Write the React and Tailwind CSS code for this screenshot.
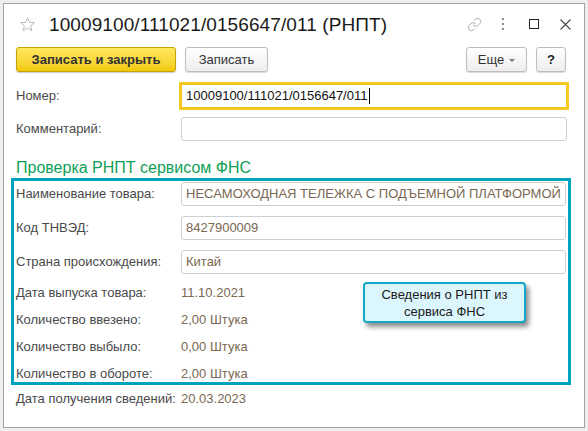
import { Link } from 'lucide-react';

function Field({ children, className = '' }) {
  return (
    <div className={`h-[24px] flex-1 flex items-center px-[4px] border border-[#cfcfcf] rounded-[3px] bg-white overflow-hidden whitespace-nowrap text-[#7a6852] ${className}`}>
      {children}
    </div>
  );
}

function Row({ label, children, className = '' }) {
  return (
    <div className={`flex items-center ${className}`}>
      <div className="w-[165px] shrink-0 text-[#4a4a4a]">{label}</div>
      {children}
    </div>
  );
}

export default function App() {
  return (
    <div className="w-[588px] h-[431px] bg-[#eeeeee] pt-[3px] pl-[3px] text-[13px] font-['Liberation_Sans',Arial,sans-serif] overflow-hidden">
      <div className="relative w-[582px] h-[425px] border border-[#a3a3a3] bg-white flex flex-col">
        {/* header */}
        <div className="h-[40px] shrink-0 flex items-center pl-[15px] pr-[13px]">
          <svg width="17" height="17" viewBox="0 0 24 24" className="shrink-0">
            <polygon
              points="12,2.5 14.8,9 21.8,9.4 16.4,13.9 18.1,20.8 12,17 5.9,20.8 7.6,13.9 2.2,9.4 9.2,9"
              fill="none"
              stroke="#b5b5b5"
              strokeWidth="1.3"
              strokeLinejoin="round"
            />
          </svg>
          <div className="ml-[13px] text-[19px] text-[#1a1a1a] leading-none tracking-[0.1px]">10009100/111021/0156647/011 (РНПТ)</div>
          <div className="ml-auto flex items-center">
            <Link size={15} strokeWidth={1.3} color="#999999" />
            <div className="ml-[20px] flex flex-col gap-[3px]">
              <div className="w-[2px] h-[2px] bg-[#8c8c8c]" />
              <div className="w-[2px] h-[2px] bg-[#8c8c8c]" />
              <div className="w-[2px] h-[2px] bg-[#8c8c8c]" />
            </div>
            <div className="ml-[25px] w-[10px] h-[10px] border-[1.5px] border-[#222]" />
            <svg width="11" height="11" viewBox="0 0 11 11" className="ml-[21px]">
              <path d="M0.5 0.5 L10.5 10.5 M10.5 0.5 L0.5 10.5" stroke="#444" strokeWidth="1.1" />
            </svg>
          </div>
        </div>

        {/* toolbar */}
        <div className="mt-[3px] h-[25px] shrink-0 flex pl-[12px] pr-[18px]">
          <button className="w-[160px] h-[25px] rounded-[3px] border border-[#c4a400] bg-gradient-to-b from-[#ffe95c] to-[#f1c900] shadow-[0_1px_1px_rgba(0,0,0,0.2)] font-bold text-[#333]">
            Записать и закрыть
          </button>
          <button className="ml-[9px] w-[83px] h-[25px] rounded-[3px] border border-[#bdbdbd] bg-gradient-to-b from-white to-[#ededed] shadow-[0_1px_1px_rgba(0,0,0,0.15)] text-[#333]">
            Записать
          </button>
          <button className="ml-auto w-[61px] h-[25px] rounded-[3px] border border-[#bdbdbd] bg-gradient-to-b from-white to-[#ededed] shadow-[0_1px_1px_rgba(0,0,0,0.15)] text-[#333] flex items-center justify-center gap-[5px]">
            <span>Еще</span>
            <span className="w-0 h-0 border-l-[3px] border-r-[3px] border-t-[3px] border-l-transparent border-r-transparent border-t-[#777] mt-[1px]" />
          </button>
          <button className="ml-[9px] w-[30px] h-[25px] rounded-[3px] border border-[#bdbdbd] bg-gradient-to-b from-white to-[#ededed] shadow-[0_1px_1px_rgba(0,0,0,0.15)] text-[#222] font-bold">
            ?
          </button>
        </div>

        {/* form */}
        <div className="pl-[12px] pr-[17px] mt-[12px]">
          <Row label="Номер:">
            <div className="h-[24px] flex-1 flex items-center px-[4px] border border-[#f5c518] ring-2 ring-[#f7c923] bg-white text-[#111] whitespace-nowrap">
              10009100/111021/0156647/011
              <span className="ml-[2px] w-[1px] h-[16px] bg-black" />
            </div>
          </Row>
          <Row label="Комментарий:" className="mt-[9px]">
            <Field className="border-[#b8b8b8]" />
          </Row>
        </div>

        <div className="pl-[12px] mt-[17px] h-[20px] flex items-center text-[16px] text-[#0f9f57]">
          Проверка РНПТ сервисом ФНС
        </div>

        <div className="ml-[7px] mr-[13px] border-[3px] border-[#00a3bf] pl-[2px] pr-[2px] pt-[1px]">
          <Row label="Наименование товара:">
            <Field>НЕСАМОХОДНАЯ ТЕЛЕЖКА С ПОДЪЕМНОЙ ПЛАТФОРМОЙ</Field>
          </Row>
          <Row label="Код ТНВЭД:" className="mt-[10px]">
            <Field>8427900009</Field>
          </Row>
          <Row label="Страна происхождения:" className="mt-[10px]">
            <Field>Китай</Field>
          </Row>
          <Row label="Дата выпуска товара:" className="mt-[10px] h-[18px]">
            <span className="text-[#7a6852]">11.10.2021</span>
          </Row>
          <Row label="Количество ввезено:" className="mt-[9px] h-[18px]">
            <span className="text-[#7a6852]">2,00 Штука</span>
          </Row>
          <Row label="Количество выбыло:" className="mt-[9px] h-[18px]">
            <span className="text-[#7a6852]">0,00 Штука</span>
          </Row>
          <Row label="Количество в обороте:" className="mt-[9px] h-[17px]">
            <span className="text-[#7a6852]">2,00 Штука</span>
          </Row>
        </div>

        <div className="pl-[12px] mt-[5px]">
          <Row label="Дата получения сведений:" className="h-[18px]">
            <span className="text-[#7a6852]">20.03.2023</span>
          </Row>
        </div>

        {/* callout */}
        <div className="absolute left-[359px] top-[278px] w-[163px] h-[41px] rounded-[4px] border-2 border-[#13a9c6] bg-[#dcf6fd] shadow-[3px_4px_5px_rgba(0,0,0,0.45)] flex flex-col items-center justify-center text-[13px] leading-[17px] text-[#1a1a1a]">
          <span>Сведения о РНПТ из</span>
          <span>сервиса ФНС</span>
        </div>
      </div>
    </div>
  );
}
